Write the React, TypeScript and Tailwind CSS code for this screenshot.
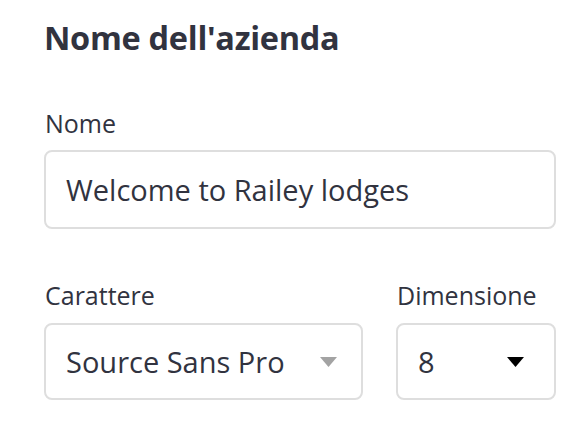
export default function App() {
  return (
    <div className="w-[586px] h-[444px] bg-white text-[#31333f] font-['Open_Sans','Noto_Sans',sans-serif] overflow-hidden">
      <div className="pl-[44px] pr-[30px] pt-[18px]">
        <h2 className="text-[32.5px] leading-[40px] font-bold tracking-[-0.3px]">Nome dell'azienda</h2>

        <div className="mt-[50px]">
          <label className="block text-[25px] leading-[30px] ml-[1px]">Nome</label>
          <div className="mt-[12px] h-[79px] w-[512px] rounded-[8px] border-2 border-[#dedede] flex items-center px-[20px]">
            <span className="text-[29px]">Welcome to Railey lodges</span>
          </div>
        </div>

        <div className="mt-[51px] flex gap-[33px]">
          <div className="w-[319px]">
            <label className="block text-[25px] leading-[30px] ml-[1px]">Carattere</label>
            <div className="mt-[13px] h-[77px] rounded-[8px] border-2 border-[#dedede] flex items-center justify-between pl-[20px] pr-[24px]">
              <span className="text-[29px]">Source Sans Pro</span>
              <svg width="17" height="10" viewBox="0 0 17 10">
                <path d="M0 0 L17 0 L8.5 10 Z" fill="#a3a3a3" />
              </svg>
            </div>
          </div>
          <div className="w-[160px]">
            <label className="block text-[25px] leading-[30px] ml-[1px]">Dimensione</label>
            <div className="mt-[13px] h-[77px] rounded-[8px] border-2 border-[#dedede] flex items-center justify-between pl-[20px] pr-[30px]">
              <span className="text-[29px]">8</span>
              <svg width="17" height="10" viewBox="0 0 17 10">
                <path d="M0 0 L17 0 L8.5 10 Z" fill="#000" />
              </svg>
            </div>
          </div>
        </div>
      </div>
    </div>
  )
}
